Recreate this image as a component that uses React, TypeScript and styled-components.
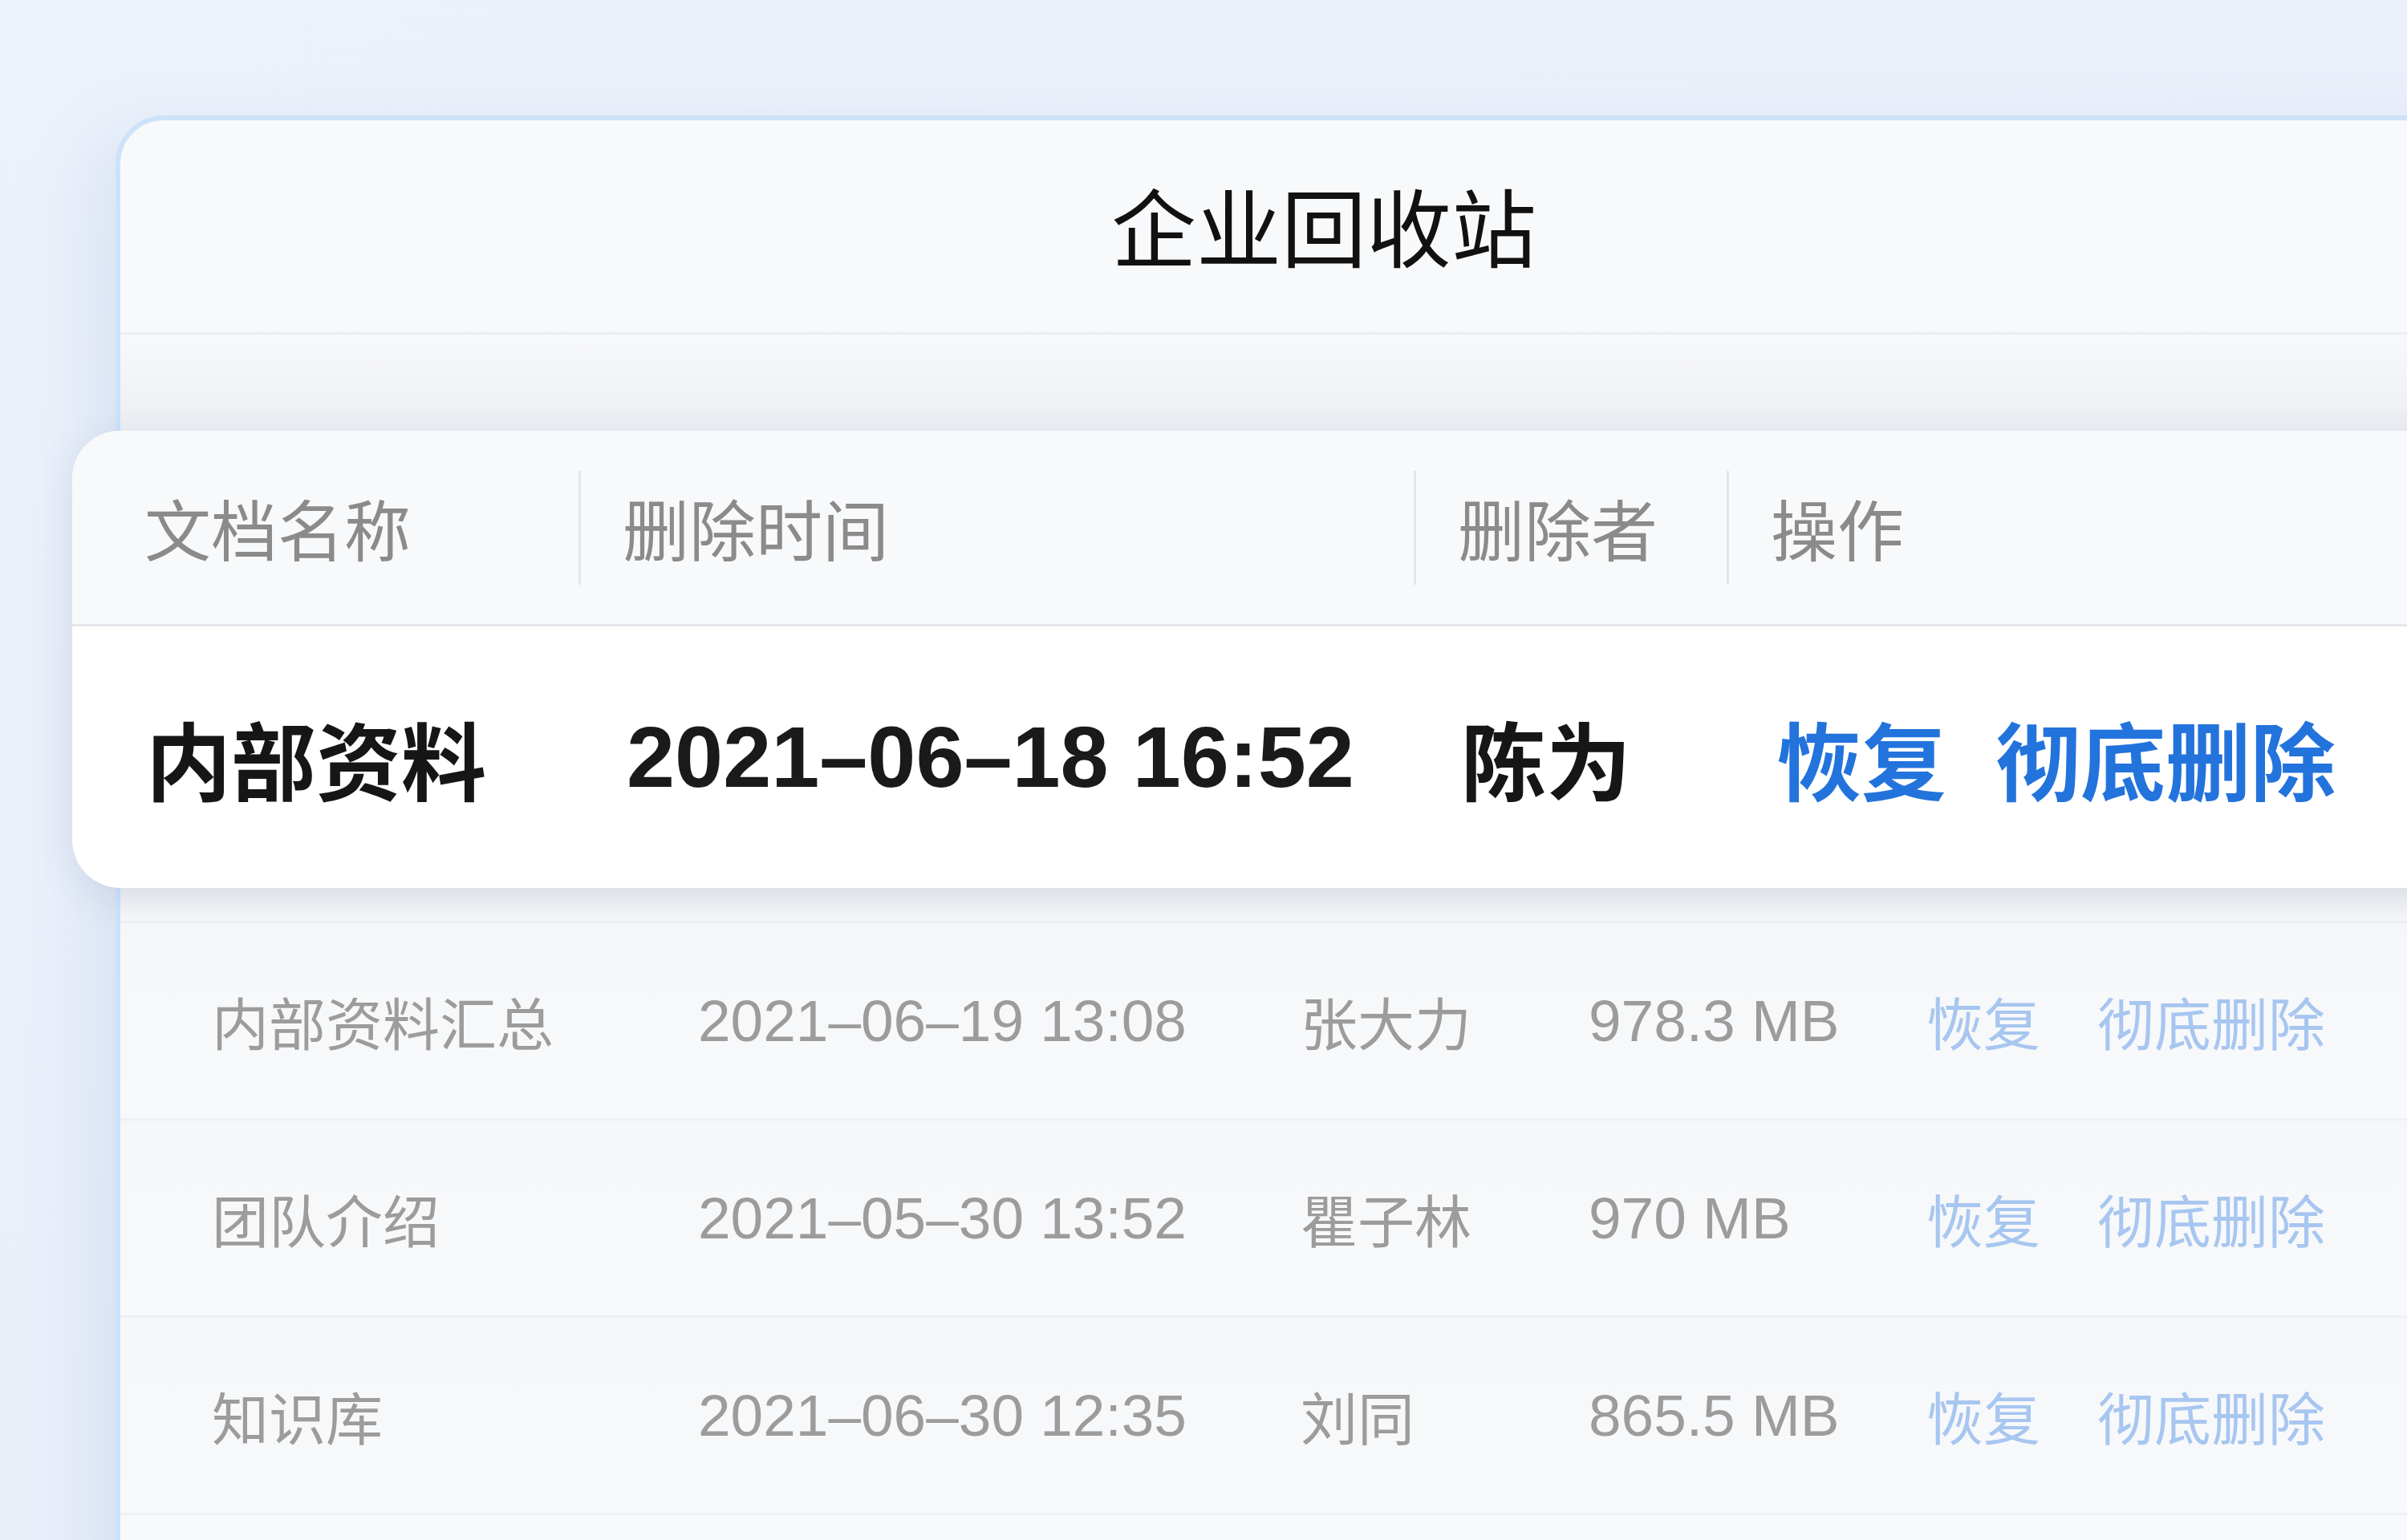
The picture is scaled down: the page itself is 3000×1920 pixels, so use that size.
import React from "react";
import styled, { createGlobalStyle } from "styled-components";

const GlobalStyle = createGlobalStyle`
  html, body {
    margin: 0;
    padding: 0;
    width: 3000px;
    height: 1920px;
    overflow: hidden;
  }
  body {
    background: linear-gradient(160deg, #ecf2fb 0%, #eaf0fa 50%, #e8eef9 100%);
    font-family: "Noto Sans CJK SC", "Noto Sans", sans-serif;
  }
  * { box-sizing: border-box; }
`;

const latin = `"Liberation Sans", "Noto Sans CJK SC", sans-serif`;

const Page = styled.div`
  width: 3000px;
  height: 1920px;
  padding: 144px 0 0 144px;
  overflow: hidden;
`;

const OuterCard = styled.div`
  width: 3020px;
  min-height: 2000px;
  background: #f8f9fb;
  border: 6px solid #cde2fa;
  border-radius: 60px;
  box-shadow: -24px 30px 90px rgba(110, 140, 200, 0.16);
  display: flex;
  flex-direction: column;
`;

const TitleBar = styled.div`
  height: 267px;
  padding: 0 0 6px 0;
  border-bottom: 3px solid #eceef2;
  display: flex;
  align-items: center;
  justify-content: center;
`;

const Title = styled.h1`
  margin: 0 0 0 -8px;
  font-size: 106px;
  font-weight: 400;
  color: #111111;
  line-height: 1;
  letter-spacing: 0;
`;

const ShadowGap = styled.div<{ $h: number; $flip?: boolean }>`
  height: ${(p) => p.$h}px;
  background: linear-gradient(
    ${(p) => (p.$flip ? "0deg" : "180deg")},
    #f8f9fb 0%,
    #eceef3 100%
  );
`;

const FloatCard = styled.div`
  position: relative;
  z-index: 1;
  margin-left: -60px;
  width: calc(100% + 60px);
  background: #ffffff;
  border-radius: 60px;
  overflow: hidden;
  box-shadow: 0 12px 50px rgba(40, 55, 95, 0.1);
`;

const cols = "631px 1041px 390px 1fr";

const HeadRow = styled.div`
  height: 244px;
  display: grid;
  grid-template-columns: ${cols};
  background: #f8f9fb;
  border-bottom: 3px solid #e5e7ec;
`;

const HeadCell = styled.div<{ $first?: boolean }>`
  display: flex;
  align-items: center;
  padding-left: ${(p) => (p.$first ? "90px" : "0")};
  font-size: 83px;
  font-weight: 400;
  color: #8b8b8b;
  line-height: 1;
`;

const Separator = styled.span`
  width: 3px;
  height: 142px;
  background: #e3e5ea;
  margin-right: 52px;
  flex: none;
`;

const BodyRow = styled.div`
  height: 326px;
  display: grid;
  grid-template-columns: ${cols};
  align-items: center;
`;

const BodyCell = styled.div<{ $pad: number }>`
  display: flex;
  align-items: center;
  gap: 61px;
  padding-left: ${(p) => p.$pad}px;
  font-size: 106px;
  font-weight: 700;
  color: #161616;
  line-height: 1;
  white-space: nowrap;
`;

const DateText = styled.span`
  font-family: ${latin};
  font-size: 108px;
  font-weight: 700;
  color: #1a1a1a;
`;

const ActionLink = styled.span<{ $faded?: boolean }>`
  color: ${(p) => (p.$faded ? "#a7c6f0" : "#2373dc")};
  cursor: pointer;
`;

const ListRow = styled.div`
  height: 249px;
  border-top: 3px solid #eef0f3;
  border-bottom: 3px solid #eef0f3;
  margin-bottom: -3px;
  background: linear-gradient(180deg, #f6f7f9 0%, #f8f9fb 100%);
  display: grid;
  grid-template-columns: 606px 751px 359px 421px 213px 1fr;
  align-items: center;
  padding-left: 114px;
  font-size: 71px;
  font-weight: 400;
  color: #9c9c9c;
  line-height: 1;
  white-space: nowrap;
`;

const ListCell = styled.span``;

const ListNumber = styled.span`
  font-family: ${latin};
  font-size: 73px;
`;

type Item = {
  name: string;
  time: string;
  who: string;
  size: string;
};

const items: Item[] = [
  { name: "内部资料汇总", time: "2021–06–19 13:08", who: "张大力", size: "978.3 MB" },
  { name: "团队介绍", time: "2021–05–30 13:52", who: "瞿子林", size: "970 MB" },
  { name: "知识库", time: "2021–06–30 12:35", who: "刘同", size: "865.5 MB" },
];

export default function App() {
  return (
    <>
      <GlobalStyle />
      <Page>
        <OuterCard>
          <TitleBar>
            <Title>企业回收站</Title>
          </TitleBar>
          <ShadowGap $h={120} />
          <FloatCard>
            <HeadRow>
              <HeadCell $first>文档名称</HeadCell>
              <HeadCell>
                <Separator />
                删除时间
              </HeadCell>
              <HeadCell>
                <Separator />
                删除者
              </HeadCell>
              <HeadCell>
                <Separator />
                操作
              </HeadCell>
            </HeadRow>
            <BodyRow>
              <BodyCell $pad={92}>内部资料</BodyCell>
              <BodyCell $pad={60}>
                <DateText>2021–06–18 16:52</DateText>
              </BodyCell>
              <BodyCell $pad={59}>陈为</BodyCell>
              <BodyCell $pad={62}>
                <ActionLink>恢复</ActionLink>
                <ActionLink>彻底删除</ActionLink>
              </BodyCell>
            </BodyRow>
          </FloatCard>
          <ShadowGap $h={41} $flip />
          {items.map((it) => (
            <ListRow key={it.name}>
              <ListCell>{it.name}</ListCell>
              <ListNumber>{it.time}</ListNumber>
              <ListCell>{it.who}</ListCell>
              <ListNumber>{it.size}</ListNumber>
              <ActionLink $faded>恢复</ActionLink>
              <ActionLink $faded>彻底删除</ActionLink>
            </ListRow>
          ))}
        </OuterCard>
      </Page>
    </>
  );
}
